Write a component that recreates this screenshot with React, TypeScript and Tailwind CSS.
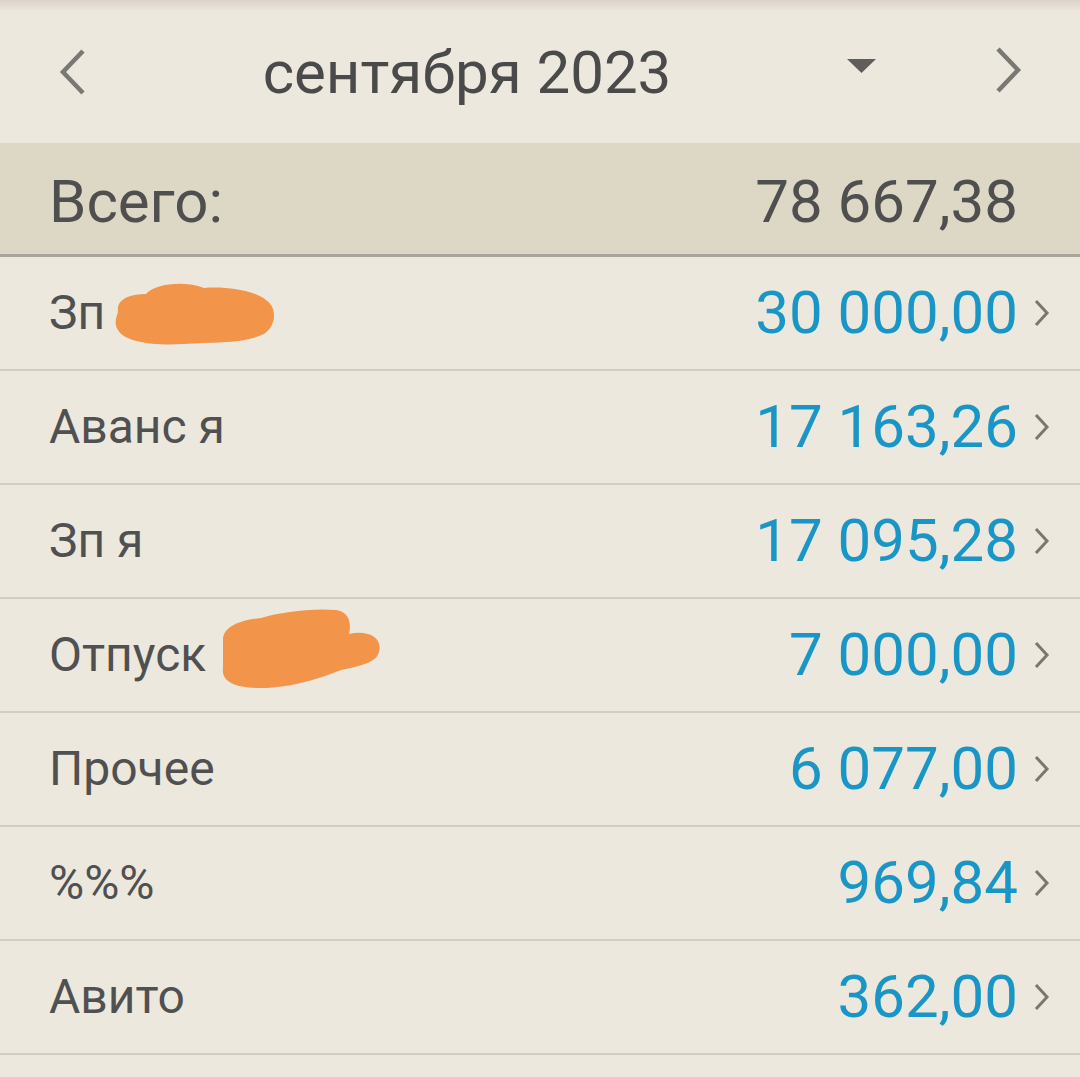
import React from 'react'

interface Row {
    label: string
    amount: string
    blob?: 'a' | 'b'
}

const rows: Row[] = [
    { label: 'Зп', amount: '30 000,00', blob: 'a' },
    { label: 'Аванс я', amount: '17 163,26' },
    { label: 'Зп я', amount: '17 095,28' },
    { label: 'Отпуск', amount: '7 000,00', blob: 'b' },
    { label: 'Прочее', amount: '6 077,00' },
    { label: '%%%', amount: '969,84' },
    { label: 'Авито', amount: '362,00' },
]

function BlobA() {
    return (
        <svg width="161" height="63" viewBox="0 0 161 63" className="ml-[9px] shrink-0">
            <path
                d="M4 30 C2 16 18 12 32 12 C40 2 70 -2 90 6 C110 4 140 8 152 18 C164 26 162 44 150 52 C130 62 100 60 70 62 C40 64 10 60 4 48 C0 42 2 36 4 30 Z"
                fill="#f2954a"
            />
        </svg>
    )
}

function BlobB() {
    return (
        <svg width="160" height="80" viewBox="0 0 160 80" className="ml-[15px] -mt-[14px] shrink-0">
            <path
                d="M2 30 C4 18 20 12 40 10 C60 4 90 0 115 2 C130 4 130 18 128 26 C145 22 162 28 158 44 C156 54 140 58 120 62 C100 70 70 80 40 80 C15 80 0 74 2 60 Z"
                fill="#f2954a"
            />
        </svg>
    )
}

function Chevron({ dir, className }: { dir: 'left' | 'right'; className?: string }) {
    return (
        <svg width="28" height="46" viewBox="0 0 28 46" className={className}>
            <path
                d={dir === 'left' ? 'M24 2 L4 23 L24 44' : 'M4 2 L24 23 L4 44'}
                fill="none"
                stroke="#7a7874"
                strokeWidth="4.5"
            />
        </svg>
    )
}

export default function App() {
    return (
        <div className="min-h-[1077px] w-[1080px] bg-[#ece8de] font-['Roboto',sans-serif]">
            {/* Month header */}
            <header className="h-[143px] bg-gradient-to-b from-[#dcd3c8] via-[#ece8de] via-[8%] to-[#ece8de]">
                <div className="flex h-full items-center">
                    <Chevron dir="left" className="ml-[59px] shrink-0" />
                    <div className="flex-1 pt-[3px] text-center text-[60px] leading-none text-[#4a4a4a]">
                        сентября 2023
                    </div>
                    <svg width="30" height="16" viewBox="0 0 30 16" className="mr-[117px] -mt-[12px] shrink-0">
                        <path d="M0 1 L29 1 L14.5 15 Z" fill="#5f5e5a" />
                    </svg>
                    <Chevron dir="right" className="mr-[58px] -mt-[3px] shrink-0" />
                </div>
            </header>

            {/* Total */}
            <div className="flex h-[114px] items-center justify-between border-b-[3px] border-[#a9a59e] bg-[#ddd7c6] pl-[49px] pr-[62px] pt-[6px] text-[60px] leading-none text-[#4f4f4f]">
                <span>Всего:</span>
                <span>78 667,38</span>
            </div>

            {/* Rows */}
            {rows.map((row) => (
                <div
                    key={row.amount}
                    className="flex h-[114px] items-center border-b-2 border-[#d3cec4] pl-[49px] pr-[30px]"
                >
                    <div className="flex flex-1 items-center text-[48px] leading-none text-[#505050]">
                        <span>{row.label}</span>
                        {row.blob === 'a' && <BlobA />}
                        {row.blob === 'b' && <BlobB />}
                    </div>
                    <span className="text-[60px] leading-none text-[#1a96c6]">{row.amount}</span>
                    <svg width="16" height="26" viewBox="0 0 16 26" className="ml-[16px] shrink-0">
                        <path d="M2 1 L13 13 L2 25" fill="none" stroke="#7a7670" strokeWidth="3" />
                    </svg>
                </div>
            ))}
        </div>
    )
}
